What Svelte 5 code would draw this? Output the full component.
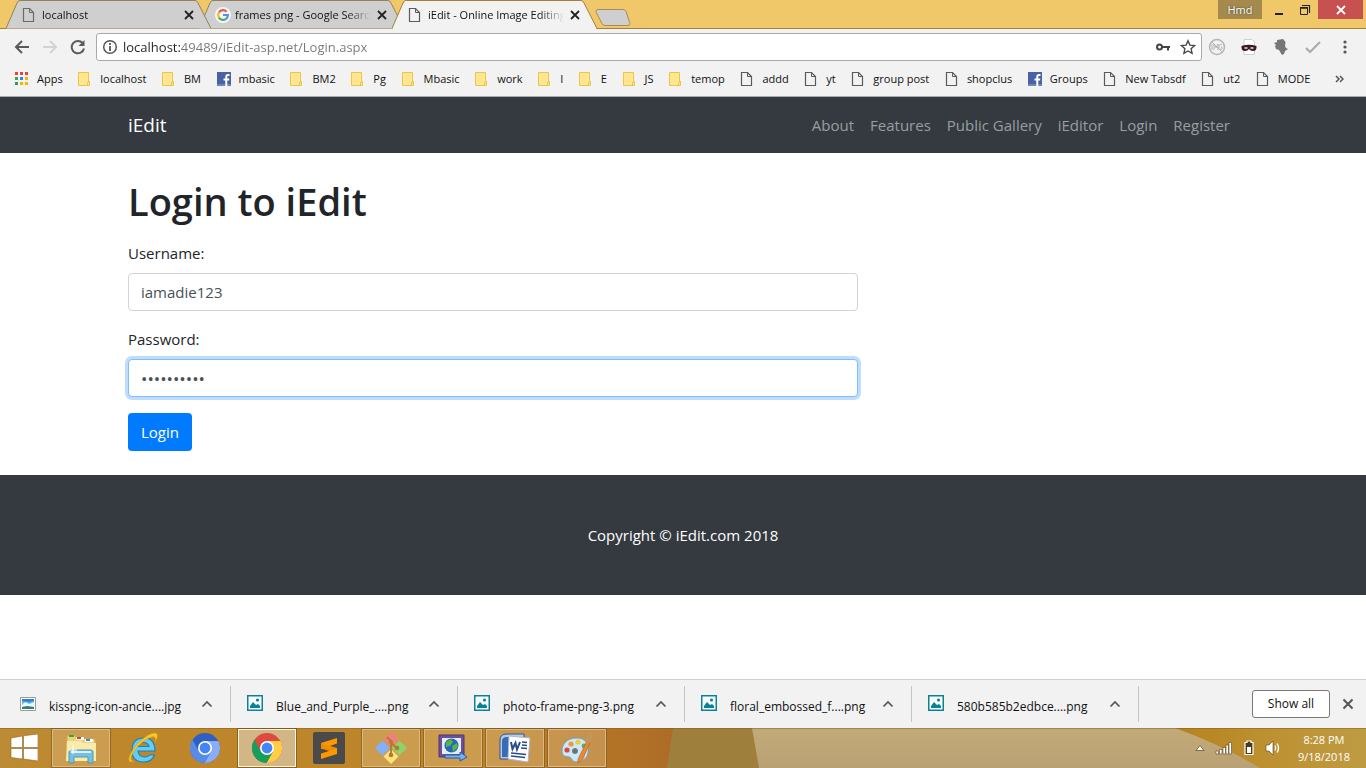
<script>
  const tabs = [
    { title: 'localhost', icon: 'doc', active: false },
    { title: 'frames png - Google Search', icon: 'google', active: false },
    { title: 'iEdit - Online Image Editing', icon: 'doc', active: true }
  ];
  const bookmarks = [
    ['apps', 'Apps'], ['folder', 'localhost'], ['folder', 'BM'], ['fb', 'mbasic'],
    ['folder', 'BM2'], ['folder', 'Pg'], ['folder', 'Mbasic'], ['folder', 'work'],
    ['folder', 'I'], ['folder', 'E'], ['folder', 'JS'], ['folder', 'temop'],
    ['doc', 'addd'], ['doc', 'yt'], ['doc', 'group post'], ['doc', 'shopclus'],
    ['fb', 'Groups'], ['doc', 'New Tabsdf'], ['doc', 'ut2'], ['doc', 'MODE']
  ];
  const links = ['About', 'Features', 'Public Gallery', 'iEditor', 'Login', 'Register'];
  const downloads = [
    { name: 'kisspng-icon-ancie....jpg', icon: 'photo' },
    { name: 'Blue_and_Purple_....png', icon: 'image' },
    { name: 'photo-frame-png-3.png', icon: 'image' },
    { name: 'floral_embossed_f....png', icon: 'image' },
    { name: '580b585b2edbce....png', icon: 'image' }
  ];
  const apps = [
    { id: 'explorer', label: 'File Explorer', state: 'open' },
    { id: 'ie', label: 'Internet Explorer', state: '' },
    { id: 'chromium', label: 'Chromium', state: '' },
    { id: 'chrome', label: 'Google Chrome', state: 'current' },
    { id: 'sublime', label: 'Sublime Text', state: '' },
    { id: 'git', label: 'Git', state: 'open' },
    { id: 'remote', label: 'Remote Display', state: 'open' },
    { id: 'word', label: 'Word', state: 'open' },
    { id: 'paint', label: 'Paint', state: 'open' }
  ];
  let url = $state('localhost:49489/iEdit-asp.net/Login.aspx');
  let username = $state('iamadie123');
  let password = $state('abcdefghij');
</script>

{#snippet glyph(name)}
  {#if name === 'doc'}
    <svg class="ic" width="14" height="16" viewBox="0 0 14 16" fill="none" stroke="#5a5a5a"><path d="M1.5 1.5h6l4 4v9h-10z" stroke-width="1.2" /><path d="M7.5 1.5v4h4" /></svg>
  {:else if name === 'google'}
    <svg class="ic" width="16" height="16" viewBox="0 0 16 16"><circle cx="8" cy="8" r="8" fill="#fff" /><g fill="none" stroke-width="2.2"><path d="M4 5.3A4.9 4.9 0 0 1 11.6 4.7" stroke="#ea4335" /><path d="M4 5.3a5 5 0 0 0 0 5.4" stroke="#fbbc05" /><path d="M3.9 10.6a4.9 4.9 0 0 0 7.2 1.2" stroke="#34a853" /><path d="M8 8h4.9a4.9 4.9 0 0 1-1.8 3.8" stroke="#4285f4" /></g></svg>
  {:else if name === 'folder'}
    <svg class="ic" width="14" height="16" viewBox="0 0 14 16"><path d="M.5 1.5h10v9h1v4H.5z" fill="#ffe68f" stroke="#e8c64c" /><path d="M9.5 14.500v-3l2-1" fill="none" stroke="#e8c64c" /></svg>
  {:else if name === 'fb'}
    <svg class="ic" width="14" height="16" viewBox="0 0 14 16"><path d="M0 1h14v14H0z" fill="#4862a3" /><path d="M0 13h14v2H0z" fill="#6d84b4" /><path d="M12.500 4H11c-1.200 0-1.700.7-1.700 1.700V15M6.500 8.500h5.700" fill="none" stroke="#fff" stroke-width="2" /></svg>
  {:else if name === 'apps'}
    <svg class="ic" width="14" height="16" viewBox="0 0 14 16"><path d="M0 1h3v3H0zM5 1h3v3H5zM10 1h3v3h-3z" fill="#ea4335" /><path d="M0 6h3v3H0z" fill="#34a853" /><path d="M5 6h3v3H5z" fill="#1a8cff" /><path d="M10 6h3v3h-3zM5 11h3v3H5zM10 11h3v3h-3z" fill="#fbb300" /><path d="M0 11h3v3H0z" fill="#2f9e50" /></svg>
  {:else if name === 'photo'}
    <svg class="ic" width="16" height="16" viewBox="0 0 16 16"><path d="M.5 1.500h15v13H.5z" fill="#fff" stroke="#9a9a9a" /><path d="M2 3h12v10H2z" fill="#62b0ea" /><path d="M2 3h12v2L8 6 2 5z" fill="#2f82cd" /><path d="M2 9q3-5 7-1l5-2v5H2z" fill="#e9f7fc" /><path d="M2 11l5-1 7 1v2H2z" fill="#3a7a70" /></svg>
  {:else if name === 'image'}
    <svg class="ic" width="16" height="16" viewBox="0 0 16 16"><path d="M.75.75h14.500v14.500H.75z" fill="#f8fcfc" stroke="#0a8199" stroke-width="1.500" /><path d="M3 13v-2l3-4 3 3 2-1 2 2v2z" fill="#0a8199" /><circle cx="10.500" cy="5" r="1.600" fill="#0a8199" /></svg>
  {/if}
{/snippet}

{#snippet cross(w)}
  <svg width="10" height="10" viewBox="0 0 10 10" stroke="currentColor" stroke-width={w} fill="none"><path d="M1 1l8 8M9 1L1 9" /></svg>
{/snippet}

{#snippet app(name)}
  {#if name === 'explorer'}
    <svg width="32" height="32" viewBox="0 0 32 32"><path d="M2 5q0-2 2-2h6l1 3h8l1 1h10l1 22H1z" fill="#eed27b" stroke="#c9a64e" /><path d="M4 3h5v2H4z" fill="#2aad38" /><path d="M11 5h8v3h-8z" fill="#fff" /><path d="M12 5h4v2h-4z" fill="#d8432b" /><path d="M20 7h8v3h-8z" fill="#fff" /><path d="M21 7h4v2h-4z" fill="#318fce" /><path d="M2 9h14l2 2h13v18H1z" fill="#faeca8" /><path d="M4 31V20q0-2 2-2h20q2 0 2 2v11h-5v-6H9v6z" fill="#79bfe0" stroke="#4f97bf" /><path d="M6 20h20" stroke="#d8f3ff" stroke-width="2" /><path d="M8 13v9M4 18h8" stroke="#fff" /></svg>
  {:else if name === 'ie'}
    <svg width="32" height="32" viewBox="0 0 32 32"><path d="M28 19H11q1 6 6.500 6 3.500 0 5-2h5Q25 30 16.500 30 5 30 5 18.500 5 6 17 6q11 0 11 13zM11 14.500h11Q21 10.500 16.500 10.500T11 14.500z" fill="#62cdf6" stroke="#1b82b7" stroke-width="1.200" /><path d="M7 29c-5 3-7-1-3-8C9 11 20 2 27 1c5-.5 4 5 1 9 1-4 0-6-3-5C17 7 8 16 5 23c-2 4-1 6 2 6z" fill="#fac72c" stroke="#d59a14" stroke-width=".6" /></svg>
  {:else if name === 'chrome' || name === 'chromium'}
    {@const c = name === 'chrome' ? ['#dd4b3e', '#ffce44', '#159e5c'] : ['#2f5fc4', '#87aef7', '#5a8ae8']}
    <svg width="30" height="30" viewBox="0 0 30 30"><circle cx="15" cy="15" r="15" fill={c[0]} /><path d="M15 8h13.300A15 15 0 0 1 14.500 30l6.500-11.500z" fill={c[1]} /><path d="M2.500 6.700A15 15 0 0 0 14.500 30L21 18.500 15 22l-6.200-3.800z" fill={c[2]} /><circle cx="15" cy="15" r="7" fill="#fff" /><circle cx="15" cy="15" r="5.400" fill="#4285f4" /></svg>
  {:else if name === 'sublime'}
    <svg width="32" height="32" viewBox="0 0 32 32"><rect width="32" height="32" rx="2" fill="#4a4a4a" /><path d="M8 11l16-5v5.500L8 17z" fill="#ff9800" /><path d="M8 11l16 5v5.500L8 16.500z" fill="#f08c00" /><path d="M8 21.500l16-5v5.500L8 27z" fill="#ff9800" /></svg>
  {:else if name === 'git'}
    <svg width="32" height="32" viewBox="0 0 32 32"><path d="M16 0l7.500 7.500L16 15l-7.500-7.500z" fill="#f27f7f" /><path d="M7.500 8.500L15 16l-7.500 7.500L0 16z" fill="#82b0fb" /><path d="M24.500 8.500L32 16l-7.500 7.500L17 16z" fill="#8fd266" /><path d="M16 17l7.500 7.500L16 32l-7.500-7.500z" fill="#ffe27c" /><path d="M12 5l4 4v15M16 11l6 5" stroke="#b37a32" stroke-width="1.800" fill="none" /><circle cx="16" cy="10" r="2" fill="#b37a32" /><circle cx="22" cy="16" r="2.300" fill="#b37a32" /><circle cx="16" cy="23" r="2.300" fill="#b37a32" /></svg>
  {:else if name === 'remote'}
    <svg width="30" height="28" viewBox="0 0 30 28"><path d="M1 1h25v22H1z" fill="#6e5099" stroke="#4e3576" /><path d="M4 4h19v16H4z" fill="#e8ecfa" /><circle cx="13.500" cy="11.500" r="7" fill="#2369b9" /><path d="M8 8l5-3 2 3-3 4-4 1zM14 12l5-3 1 4-5 5z" fill="#58b34c" /><path d="M7 21h15v-3l7 5-7 4v-3H7z" fill="#72b2ef" stroke="#235ba8" /></svg>
  {:else if name === 'word'}
    <svg width="32" height="30" viewBox="0 0 32 30"><path d="M1 26V7q0-6 7-6h17v25z" fill="#b5cce9" stroke="#2c529c" /><path d="M3 24V8q0-4 5-4h14v20z" fill="#386cb8" /><path d="M10 3l21 2-2 24-20-3z" fill="#fff" stroke="#a8b8d0" /><path d="M12 9l1.500 7 3-6 1.500 6.500 3-7.500" fill="none" stroke="#274b91" stroke-width="2" /><path d="M23 9l5 .5M23 12l5 .5M22 15l6 .5M12 20l15 1.500M12 23l14 1.500" stroke="#274b91" stroke-width="1.500" /></svg>
  {:else if name === 'paint'}
    <svg width="32" height="32" viewBox="0 0 32 32"><path d="M16 6C6 6 1 12 1 19c0 6 4 5 7 6 4 1 2 5 8 5 9-1 12-7 11-14C26 9 22 6 16 6z" fill="#cfe7f6" stroke="#6ba3cb" /><circle cx="10" cy="12" r="2.600" fill="#ee9b35" /><circle cx="17" cy="10" r="2.600" fill="#e9cf3a" /><circle cx="6" cy="18" r="2.600" fill="#d8493d" /><circle cx="23" cy="14" r="2.400" fill="#57b356" /><circle cx="14" cy="19" r="2.600" fill="#866b4a" stroke="#4b91c0" /><path d="M17 31q-1-3 1-6L26 9l3 1-7 17z" fill="#e8892d" stroke="#b2601c" stroke-width=".6" /><path d="M25 10q-1-7 6-9 2 5-2 10z" fill="#c3965c" /></svg>
  {/if}
{/snippet}

<div class="desktop">
  <header class="browser">
    <div class="strip">
      <div class="tabs">
        {#each tabs as t, i}
          <div class="tab" class:active={t.active} style:z-index={t.active ? 9 : 5 - i}>
            <svg class="shape" width="207" height="29" viewBox="0 0 207 29"><path d="M0 28.500L11 3Q12 .5 14 .5H189Q191 .5 192 3L205 28.500" fill={t.active ? '#f2f2f2' : '#cfcfcf'} stroke={t.active ? '#a3803c' : '#93815e'} />{#if t.active}<path d="M1 28.500h203" stroke="#f2f2f2" />{/if}</svg>
            <span class="favicon">{@render glyph(t.icon)}</span>
            <button class="title">{t.title}</button>
            <button class="close" aria-label="Close tab">{@render cross(1.8)}</button>
          </div>
        {/each}
        <button class="newtab" aria-label="New tab"><svg width="36" height="18" viewBox="0 0 36 18"><path d="M3 .5h25q2 0 3 2l4 12q0 2-2 2H10q-2 0-3-2L1 3Q1 .5 3 .5z" fill="#cfcfcf" stroke="#a88c58" /></svg></button>
      </div>
      <div class="window">
        <button class="user">Hmd</button>
        <button class="win" aria-label="Minimize"><svg width="10" height="12" viewBox="0 0 10 12"><path d="M1 9h8v2H1z" fill="#222" /></svg></button>
        <button class="win" aria-label="Restore"><svg width="12" height="12" viewBox="0 0 12 12" fill="none" stroke="#222"><path d="M1.500 3.500h7v7h-7z" /><path d="M1 4h8" stroke-width="1.500" /><path d="M3 1.500h7.500V9" stroke-width="1.200" /></svg></button>
        <button class="win quit" aria-label="Close">{@render cross(1.8)}</button>
      </div>
    </div>

    <div class="toolbar">
      <div class="history">
        <button aria-label="Back"><svg width="16" height="16" viewBox="0 0 16 16" fill="none" stroke="#5a5a5a" stroke-width="2"><path d="M15 8H2M8 2L2 8l6 6" /></svg></button>
        <button aria-label="Forward"><svg width="16" height="16" viewBox="0 0 16 16" fill="none" stroke="#d2d2d2" stroke-width="2"><path d="M1 8h13M8 2l6 6-6 6" /></svg></button>
        <button aria-label="Reload"><svg width="16" height="16" viewBox="0 0 16 16" fill="none" stroke="#5a5a5a" stroke-width="2"><path d="M14 9.500A6.200 6.200 0 1 1 12.600 4" /><path d="M14.500 1v6h-6z" fill="#5a5a5a" stroke="none" /></svg></button>
      </div>
      <div class="omnibox">
        <svg width="16" height="16" viewBox="0 0 16 16" fill="none" stroke="#555"><circle cx="8" cy="8" r="6.300" stroke-width="1.500" /><path d="M8 7v5M8 4v2" stroke-width="1.800" /></svg>
        <input class="url" aria-label="Address" bind:value={url} />
        <button aria-label="Saved passwords"><svg width="16" height="16" viewBox="0 0 16 16"><circle cx="4.500" cy="8" r="2.500" fill="none" stroke="#444" stroke-width="2" /><path d="M7 8h8M13 8v3.500" stroke="#444" stroke-width="2" /></svg></button>
        <button aria-label="Bookmark this page"><svg width="16" height="16" viewBox="0 0 16 16" fill="none" stroke="#4a4a4a" stroke-width="1.400"><path d="M8 1.800l1.900 4.300 4.700.5-3.500 3.200 1 4.600L8 12l-4.100 2.400 1-4.600L1.400 6.600l4.700-.5z" /></svg></button>
      </div>
      <div class="extensions">
        <button aria-label="Image blocker"><svg width="18" height="18" viewBox="0 0 18 18" fill="none" stroke="#b5b5b5"><circle cx="9" cy="9" r="7.500" stroke-width="1.500" /><path d="M3.500 3.500l11 11" /><path d="M4 6v6M6 12V6l2 4 2-4v6M14 7q-3-2-3 2t3 2V9h-1" /></svg></button>
        <button aria-label="Incognito filter"><svg width="18" height="18" viewBox="0 0 18 18"><path d="M4 1.500h8l2.500 2.500v12.500H4z" fill="#fff" stroke="#cfcfcf" /><path d="M1.500 8q7.500-2.500 15 0 .5 5-3.500 5-3 0-4-2-1 2-4 2-4 0-3.500-5z" fill="#3b191e" /><path d="M4.500 10h3M10.500 10h3" stroke="#f2dcdc" stroke-width="1.500" /></svg></button>
        <button aria-label="Profile tool"><svg width="18" height="18" viewBox="0 0 18 18"><path d="M5 2l6-1 2.500 3-.5 4 1 2 2 1-3 2-1 3-2 1-3-5-3-1-1-3 1-1-2-2 3-1z" fill="#777" /></svg></button>
        <button aria-label="Checker"><svg width="18" height="18" viewBox="0 0 18 18" fill="none" stroke="#aaa" stroke-width="2"><path d="M2 10l4 4L16 4" /></svg></button>
        <button aria-label="Menu"><svg width="18" height="18" viewBox="0 0 18 18" fill="#555"><circle cx="9" cy="4" r="1.600" /><circle cx="9" cy="9" r="1.600" /><circle cx="9" cy="14" r="1.600" /></svg></button>
      </div>
    </div>

    <nav class="bookmarks" aria-label="Bookmarks">
      {#each bookmarks as [icon, label]}
        <a href="#top">{@render glyph(icon)}<span>{label}</span></a>
      {/each}
      <button class="more" aria-label="More bookmarks"><svg width="9" height="8" viewBox="0 0 9 8" fill="none" stroke="#555" stroke-width="1.500"><path d="M1 1l3 3-3 3M5 1l3 3-3 3" /></svg></button>
    </nav>
  </header>

  <main class="page">
    <nav class="navbar">
      <div class="container bar">
        <a class="brand" href="#top">iEdit</a>
        <div class="links">
          {#each links as l}<a href="#top">{l}</a>{/each}
        </div>
      </div>
    </nav>
    <div class="container">
      <form class="login" onsubmit={(e) => e.preventDefault()}>
        <h1>Login to iEdit</h1>
        <label for="username">Username:</label>
        <input id="username" type="text" bind:value={username} />
        <label for="password">Password:</label>
        <input id="password" class="focused" type="password" bind:value={password} />
        <button class="primary" type="submit">Login</button>
      </form>
    </div>
    <footer class="foot">Copyright © iEdit.com 2018</footer>
  </main>

  <section class="shelf" aria-label="Downloads">
    {#each downloads as d}
      <div class="download">
        <span class="dicon" class:low={d.icon === 'photo'}>{@render glyph(d.icon)}</span>
        <button class="name">{d.name}</button>
        <button class="chev" aria-label="Download options"><svg width="12" height="8" viewBox="0 0 12 8" fill="none" stroke="#555" stroke-width="1.700"><path d="M1.500 6.500L6 2l4.500 4.500" /></svg></button>
      </div>
    {/each}
    <button class="showall">Show all</button>
    <button class="dismiss" aria-label="Close downloads bar"><svg width="12" height="12" viewBox="0 0 12 12" fill="none" stroke="#555" stroke-width="2"><path d="M1.500 1.500l9 9M10.500 1.500l-9 9" /></svg></button>
  </section>

  <footer class="taskbar">
    <svg class="wallpaper" viewBox="0 0 1366 40" preserveAspectRatio="none">
      <defs>
        <linearGradient id="amber"><stop offset="0" stop-color="#bc8b35" /><stop offset=".15" stop-color="#be872b" /><stop offset=".7" stop-color="#bd8529" /><stop offset="1" stop-color="#ae6c27" /></linearGradient>
        <linearGradient id="sand" x2="0" y2="1"><stop offset="0" stop-color="#c2aa78" /><stop offset="1" stop-color="#b9a176" /></linearGradient>
        <linearGradient id="gold"><stop offset="0" stop-color="#b6821d" /><stop offset=".5" stop-color="#bd9132" /><stop offset="1" stop-color="#be9b43" /></linearGradient>
      </defs>
      <path d="M0 0h673v40H0z" fill="url(#amber)" />
      <path d="M673 0h80l7 40h-93z" fill="#9e803c" />
      <path d="M752 0h614v40H759z" fill="url(#sand)" />
      <path d="M1175 0h191v40h-106q-40-24-85-40z" fill="url(#gold)" />
      <path d="M0 .5h1366" stroke="#7b5a1e" stroke-opacity=".45" />
    </svg>
    <button class="start" aria-label="Start"><svg width="28" height="28" viewBox="0 0 28 28" fill="#fff" stroke="#8d6728" stroke-width=".6"><path d="M1 4l11.500-2v11.500H1zM13.500 1.800L28 0v13.500H13.500zM1 14.500h11.500V25L1 23.500zM13.500 14.500H28V27l-14.500-2z" /></svg></button>
    <div class="apps">
      {#each apps as a}
        <button class="app {a.state}" aria-label={a.label}>{@render app(a.id)}</button>
      {/each}
    </div>
    <div class="tray">
      <svg width="10" height="8" viewBox="0 0 10 8"><path d="M5 1.500L9 6.500H1z" fill="#fff" stroke="#6e531e" stroke-width=".8" /></svg>
      <svg width="18" height="14" viewBox="0 0 18 14" fill="#fff" stroke="#5d4519" stroke-width=".6"><path d="M1 10h2.500v3H1zM4.500 8.500H7V13H4.500zM8 6.500h2.500V13H8zM11 4h2.500v9H11zM14 1.500h2.500V13H14z" /></svg>
      <svg width="12" height="16" viewBox="0 0 12 16"><path d="M2 2.500h2V1h4v1.500h2v12H2z" fill="#4b3918" stroke="#fff" stroke-width="1.200" /><path d="M4 7h4v6H4z" fill="#fff" /></svg>
      <svg width="16" height="16" viewBox="0 0 16 16" fill="none"><path d="M1 5h3l4-4v14l-4-4H1z" fill="#fff" stroke="#5d4519" stroke-width=".6" /><path d="M10 5.500q1.500 2.500 0 5M12 3.500q3 4.500 0 9" stroke="#fff" stroke-width="1.300" /></svg>
      <div class="clock"><span>8:28 PM</span><span>9/18/2018</span></div>
    </div>
  </footer>
</div>

<style>
  :global(body) { margin: 0; background: #fff; }
  .desktop, .desktop * { box-sizing: border-box; }
  .desktop {
    min-height: 100vh; display: flex; flex-direction: column;
    font-family: "Open Sans", "Noto Sans", sans-serif; font-size: 11px; line-height: 16px; color: #111;
  }
  svg { display: block; flex: none; }
  button { border: 0; padding: 0; background: none; font: inherit; color: inherit; display: flex; align-items: center; justify-content: center; }
  a { color: inherit; text-decoration: none; }

  .browser { background: #f2f2f2; border-bottom: 1px solid #aaaaae; }
  .strip { height: 29px; background: #f0c869; box-shadow: inset 0 -1px #a3803c; display: flex; justify-content: space-between; align-items: flex-start; }
  .tabs { display: flex; padding-left: 6px; }
  .tab { position: relative; width: 205px; height: 29px; margin-right: -12px; padding: 0 17px; display: flex; align-items: center; }
  .shape { position: absolute; left: 0; top: 0; }
  .favicon { position: relative; width: 20px; flex: none; display: flex; margin-left: -1px; }
  .tab:not(.active) .favicon { opacity: .85; }
  .title { position: relative; flex: 1; min-width: 0; overflow: hidden; white-space: nowrap; justify-content: flex-start; mask-image: linear-gradient(to right, #000 calc(100% - 24px), transparent); margin-right: 6px; }
  .close { position: relative; color: #222; width: 10px; }
  .newtab { margin: 7px 0 0 10px; }
  .window { display: flex; height: 19px; padding-right: 3px; }
  .window button { height: 19px; }
  .user { width: 44px; background: #a48b4d; color: #fff; text-shadow: 0 0 2px #333; margin-right: 4px; }
  .win { width: 26px; }
  .quit { width: 45px; background: #c75050; color: #fff; }

  .toolbar { display: flex; align-items: center; padding: 4px 12px 4px 14px; }
  .history { display: flex; gap: 12px; padding-right: 10px; }
  .omnibox { flex: 1; height: 28px; display: flex; align-items: center; gap: 9px; padding: 0 5px; background: #fff; border: 1px solid #aaa; border-radius: 3px; }
  .url {
    flex: 1; min-width: 0; border: 0; outline: 0; padding: 0; margin-left: -4px; font: 13px/20px "Open Sans", sans-serif; color: transparent;
    background: linear-gradient(to right, #222 57px, #777 57px); background-clip: text;
  }
  .extensions { display: flex; gap: 14px; padding-left: 6px; }

  .bookmarks { height: 31px; display: flex; align-items: center; justify-content: space-between; padding: 0 22px 4px 15px; overflow: hidden; white-space: nowrap; }
  .bookmarks a { display: flex; align-items: center; gap: 8px; }
  .more { padding-left: 9px; }

  .page { flex: 1; background: #fff; font-size: 15px; line-height: 24px; color: #212529; }
  .container { width: 100%; max-width: 1140px; margin: 0 auto; padding: 0 15px; }
  .navbar { background: #343a40; color: #fff; }
  .bar { display: flex; align-items: center; justify-content: space-between; min-height: 56px; }
  .brand { font-size: 19px; line-height: 30px; }
  .links { display: flex; color: #9a9da0; }
  .links a { padding: 8px; }
  .login { width: 100%; max-width: 730px; padding: 24px 0; display: flex; flex-direction: column; align-items: stretch; }
  h1 { margin: 0 0 16px; font-size: 38px; line-height: 48px; font-weight: 600; }
  label { margin-bottom: 8px; }
  .login input { height: 38px; margin: 0 0 16px; padding: 6px 12px; border: 1px solid #ced4da; border-radius: 4px; font: inherit; color: #495057; background: #fff; outline: 0; }
  .login .focused { font-size: 17px; border-color: #80bdff; box-shadow: 0 0 0 3px #bfdeff; }
  .primary { align-self: flex-start; height: 38px; padding: 0 13px; background: #007bff; color: #fff; border-radius: 4px; }
  .foot { background: #343a40; color: #fff; text-align: center; padding: 48px 15px; }

  .shelf { height: 49px; display: flex; align-items: center; background: #f2f2f2; border-top: 1px solid #d0d0d0; padding: 0 12px 0 4px; font-size: 12px; }
  .download { width: 227px; height: 36px; flex: 0 1 auto; display: flex; align-items: center; padding: 0 17px 0 16px; border-right: 1px solid #c4c4c4; }
  .dicon { width: 29px; padding-bottom: 2px; }
  .dicon.low { padding-bottom: 0; }
  .name { white-space: nowrap; padding-top: 5px; }
  .chev { margin-left: auto; }
  .showall { margin-left: auto; width: 78px; height: 28px; background: #fff; border: 1px solid #777; border-radius: 3px; }
  .dismiss { width: 12px; margin-left: 12px; color: #555; }

  .taskbar { position: relative; height: 40px; display: flex; align-items: center; }
  .wallpaper { position: absolute; inset: 0; width: 100%; height: 100%; }
  .start { position: relative; width: 48px; height: 40px; }
  .apps { position: relative; display: flex; gap: 4px; padding-left: 4px; }
  .app { width: 58px; height: 38px; }
  .open { background: rgba(225, 190, 135, .4); border: 1px solid #d9b987; outline: 1px solid rgba(110, 75, 20, .5); }
  .current { background: #d3b686; border: 1px solid #fff6e2; outline: 1px solid rgba(110, 75, 20, .6); }
  .tray { position: relative; margin-left: auto; display: flex; align-items: center; gap: 10px; padding-right: 16px; color: #fff; }
  .clock { display: flex; flex-direction: column; align-items: center; line-height: 17px; margin-left: 7px; }
</style>
